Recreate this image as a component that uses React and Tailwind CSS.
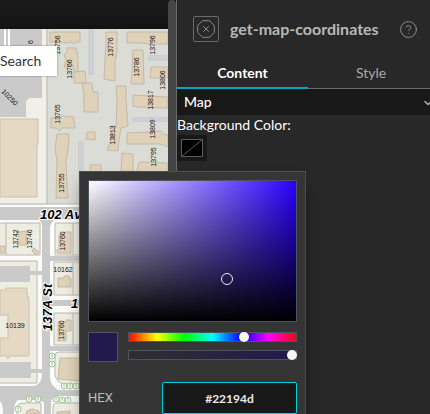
import React, { useState } from 'react';
import { ChevronDown, CircleHelp, OctagonX } from 'lucide-react';

const buildings = [
  '50,32 80,32 80,42 76,42 74,44 71,42 68,43 50,42',
  '67,48 76,48 78,56 78,71 74,72 73,66 64,67 66,60 64,55 67,52',
  '74,72 85,71 86,83 74,83',
  '82,83 92,83 93,92 98,92 98,112 84,112 84,94',
  '106,32 117,32 117,52 115,62 115,81 109,80 104,79 105,60 106,45',
  '127,32 168,32 168,44 150,44 140,43 127,43',
  '133,50 143,50 144,84 131,84 132,72',
  '151,67 168,67 168,78 150,78',
  '116,86 126,86 126,100 128,126 121,128 119,140 118,151 107,150 110,143 112,130 116,127 117,100',
  '133,95 168,97 168,108 138,107 133,106',
  '51,118 57,118 58,116 61,118 62,115 66,117 72,116 72,118 74,118 75,128 62,128 60,131 56,128 51,128',
  '57,134 69,134 68,150 66,160 67,185 68,198 56,198 57,160 55,150',
  '87,132 95,132 95,140 86,139',
  '127,133 150,132 161,131 163,134 168,135 168,147 160,144 127,144',
  '122,153 133,154 133,171 121,171',
  '139,162 168,163 168,172 137,172',
  '90,165 101,165 101,172 90,172',
  '18,232 26,231 27,245 18,245',
  '59,235 65,232 71,232 71,253 57,253 57,250 59,249',
  '32,251 34,248 39,252 36,255',
  '0,246 5,246 5,253 0,253',
  '58,278 64,278 64,276 69,276 71,279 71,287 58,287',
  '58,322 66,322 66,320 71,320 71,331 66,331 66,341 58,341',
  '60,358 80,358 80,381 58,379 59,368',
  '27,411 32,409 39,411 39,414 26,414',
  '57,412 70,411 70,414 57,414',
];

const labels = [
  [33, 42, '6'],
  [60, 45, '13756'],
  [72, 69, '13766'],
  [113, 47, '13776'],
  [139, 67, '13786'],
  [155, 45, '13796'],
  [165, 80, '13806'],
  [153, 100, '13817'],
  [115, 135, '13813'],
  [155, 129, '13809'],
  [156, 157, '13795'],
  [60, 114, '13765'],
  [64, 183, '13755'],
  [18, 239, '13742'],
  [32, 239, '13746'],
  [65, 241, '13760'],
  [64, 330, '13760'],
];

const trees = [
  [52, 356], [52, 364], [64, 386], [70, 386], [76, 386],
  [29, 399], [38, 399], [56, 399], [62, 400], [68, 400], [18, 409],
];

function StreetMap() {
  return (
    <svg viewBox="0 29 168 385" preserveAspectRatio="xMinYMin slice" className="block w-full h-full" role="img" aria-label="Map">
      <rect y="29" width="168" height="385" fill="#fbfbf9" />
      <rect y="29" width="47" height="176" fill="#f1efe7" />
      <path d="M0 29H42V98H30Q26 99 26 104V117H0Z" fill="#cacaca" />
      <path d="M5 29V50M9 29V50" stroke="#fff" strokeWidth="2" />
      <rect x="47" y="29" width="121" height="175" fill="#dcdcd6" />
      <path d="M47 29V204M0 204H79" stroke="#b5b5b0" fill="none" />
      <path d="M0 119H38V144H37V197H0Z" fill="#e6d9c4" stroke="#c9c0b1" />
      <g fill="#cecfd3">
        <rect x="88" y="29" width="6" height="46" />
        <rect x="148" y="55" width="20" height="6" />
        <rect x="132" y="117" width="36" height="5" />
        <rect x="78" y="141" width="6" height="40" />
      </g>

      {/* roads */}
      <g fill="#c9c9c9">
        <rect y="207" width="80" height="13" />
        <path d="M38 219H56Q50 222 50 229V377Q50 385 58 390H80V396H56Q51 397 51 403V414H44V404Q44 401 38 400H18Q14 402 14 414H3Q3 403 0 401V386H34Q42 384 42 374V230Q43 222 38 219Z" />
        <rect x="48" y="256" width="32" height="5" />
        <rect x="48" y="300" width="32" height="6" />
        <rect x="48" y="346" width="32" height="5" />
      </g>

      {/* blocks */}
      <g fill="#efede2" stroke="#b8b8b2">
        <path d="M-1 223H40V255H-1ZM6 223V255" />
        <path d="M55 223H80V255H55ZM73 223V255" />
        <path d="M54 262H80V295H54ZM73 262V295" />
        <path d="M-1 261H37V383H-1Z" />
        <path d="M54 313H80V345H54ZM73 313V345" />
        <path d="M80 352H59Q55 352 55 356V375Q57 383 64 384H80Z" />
        <path d="M17 414V407Q18 403 24 403H41V414" />
        <path d="M53 414V407Q53 403 58 403H80V414" />
      </g>
      <g fill="#cacaca">
        <rect y="266" width="30" height="16" />
        <rect x="30" y="271" width="15" height="4" />
        <rect y="362" width="31" height="16" />
        <rect x="31" y="369" width="13" height="4" />
      </g>
      <path d="M0 290H6V288H27V297H29V356H9V358H7V356H0Z" fill="#e6d9c4" stroke="#c9c0b1" />
      <rect x="-1" y="315" width="9" height="23" fill="#efede2" stroke="#c9c0b1" />

      <g fill="#dfd2b9" stroke="#c4b9a6">
        {buildings.map((points) => <polygon key={points} points={points} />)}
      </g>

      <g fill="#f4f7ef" stroke="#9dc795">
        {trees.map(([x, y]) => (
          <g key={`${x}-${y}`}>
            <circle cx={x} cy={y} r="3" />
            <path d={`M${x} ${y - 2}v3`} />
          </g>
        ))}
      </g>

      <g fontFamily="'Liberation Sans', Arial, sans-serif" fontSize="7" fill="#111" textAnchor="middle">
        {labels.map(([x, y, text]) => (
          <text key={`${x}-${y}`} transform={`translate(${x} ${y}) rotate(-90)`}>{text}</text>
        ))}
        <text transform="translate(8 99) rotate(45)">10250</text>
        <text x="63" y="272">10162</text>
        <text x="15" y="328">10139</text>
      </g>
      <g fontFamily="'Liberation Sans', Arial, sans-serif" fontSize="13" fontWeight="bold" fontStyle="italic" fill="#000" stroke="#fff" strokeWidth="2" paintOrder="stroke">
        <text x="40" y="219">102 Ave</text>
        <text transform="translate(52 331) rotate(-90)">137A St</text>
        <text x="71" y="308">1</text>
      </g>
    </svg>
  );
}

const sliderClass =
  'block w-full h-[10px] appearance-none shadow-[inset_0_0_0_1px_#4b545c] [&::-webkit-slider-thumb]:appearance-none [&::-webkit-slider-thumb]:size-[10px] [&::-webkit-slider-thumb]:rounded-full [&::-webkit-slider-thumb]:bg-[#f8f8f8]';

function ColorPicker() {
  const [hue, setHue] = useState(251);
  const [alpha, setAlpha] = useState(100);
  const [hex, setHex] = useState('#22194d');

  return (
    <div className="absolute z-20 top-full -left-[98px] mt-[10px] w-[227px] p-2 bg-[#353535] border border-[#4f4f4f] shadow-lg shadow-black/40">
      <div className="relative h-[142px] border border-[#4b545c] bg-[linear-gradient(to_top,#000,transparent),linear-gradient(to_right,#fff,#2a00ff)]">
        <span className="absolute left-[132px] top-[92px] size-3 rounded-full border border-[#e8e8e8]" />
      </div>

      <div className="flex gap-[10px] mt-[10px]">
        <span className="size-[30px] shrink-0 border border-[#4b545c] bg-[#22194d]" />
        <div className="flex-1 flex flex-col gap-2">
          <input type="range" aria-label="Hue" min="0" max="360" value={hue} onChange={(e) => setHue(Number(e.target.value))} className={`${sliderClass} bg-[linear-gradient(to_right,#f00,#ff0_17%,#0f0_33%,#0ff_50%,#00f_67%,#f0f_83%,#f00)]`} />
          <input type="range" aria-label="Opacity" min="0" max="100" value={alpha} onChange={(e) => setAlpha(Number(e.target.value))} className={`${sliderClass} bg-[linear-gradient(to_right,#2f2f2f,#22194d)]`} />
        </div>
      </div>

      <div className="flex items-center justify-between mt-5">
        <label htmlFor="hex" className="text-[13px] text-[#bdbdbd] font-['Roboto',sans-serif]">HEX</label>
        <input id="hex" type="text" value={hex} onChange={(e) => setHex(e.target.value)} className="w-[135px] h-8 rounded-xs border border-[#00d0e0] bg-[#181818] text-center text-xs font-bold text-[#eaeaea] outline-none" />
      </div>
    </div>
  );
}

export default function App() {
  return (
    <div className="flex h-screen overflow-hidden bg-[#282828] font-[Lato,sans-serif] text-white">
      <section className="w-[177px] shrink-0 flex border-r border-[#6a6a6a] bg-[#181818]">
        <div className="flex-1 flex flex-col min-w-0">
          <div className="h-[29px] shrink-0 bg-linear-to-b from-[#1c1c1c] to-[#131313]" />
          <div className="relative flex-1 min-h-0">
            <StreetMap />
            <button className="absolute left-0 top-[17px] w-[57px] h-[30px] bg-white text-left text-sm text-[#333] shadow-[0_0_2px_rgba(0,0,0,0.4)]">Search</button>
          </div>
        </div>
        <div className="w-2 rounded-t-full bg-[#454545]" />
      </section>

      <aside className="flex-1 min-w-0">
        <header className="flex items-center h-[58px] pl-4 pr-3">
          <button aria-label="Close" className="size-[26px] shrink-0 flex items-center justify-center border border-[#6a6a6a] rounded-xs text-[#a0a0a0]">
            <OctagonX size={20} strokeWidth={1} />
          </button>
          <h1 className="ml-[11px] flex-1 text-base font-bold text-[#b8b8b8] whitespace-nowrap">get-map-coordinates</h1>
          <button aria-label="Help" className="shrink-0 text-[#a8a8a8]"><CircleHelp size={19} strokeWidth={1} /></button>
        </header>

        <div className="flex h-[31px] text-sm" role="tablist">
          <button role="tab" aria-selected="true" className="w-[131px] shrink-0 border-b-2 border-[#00a9bb] font-bold">Content</button>
          <button role="tab" aria-selected="false" className="flex-1 pl-1 border-b border-[#6a6a6a] text-[#a9a9a9]">Style</button>
        </div>

        <div className="relative">
          <select aria-label="Layer" className="block w-full h-[26px] appearance-none bg-[#181818] pl-[7px] text-sm font-medium">
            <option>Map</option>
          </select>
          <ChevronDown size={12} strokeWidth={3} className="absolute -right-1 top-2 text-[#b0b0b0] pointer-events-none" />
        </div>

        <div>
          <div id="bg-label" className="text-sm leading-5">Background Color:</div>
          <div className="relative inline-block">
            <button aria-labelledby="bg-label" className="flex items-center justify-center w-[30px] h-[26px] bg-[#181818]">
              <svg viewBox="0 0 22 18" className="w-[22px] h-[18px]" fill="#000" stroke="#5c5c5c">
                <path d="M.5 .5H21.5V17.5H.5ZM.5 17.5L21.5 .5" />
              </svg>
            </button>
            <ColorPicker />
          </div>
        </div>
      </aside>
    </div>
  );
}
